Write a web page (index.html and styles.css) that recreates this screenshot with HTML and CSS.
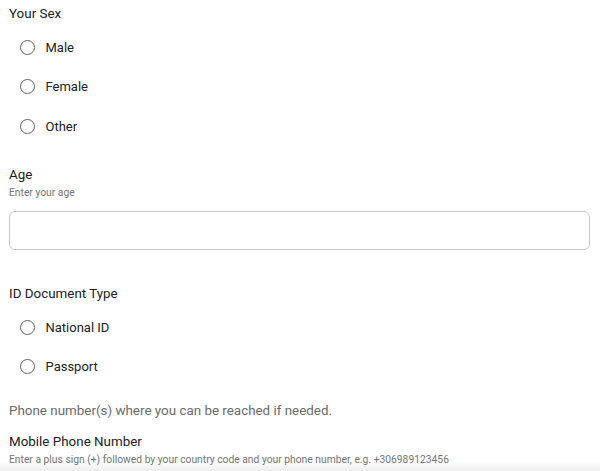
FILE: index.html
```html
<!DOCTYPE html>
<html>
<head>
<meta charset="utf-8">
<link rel="stylesheet" href="styles.css">
</head>
<body>
<div class="form">
  <section class="field">
    <div class="label">Your Sex</div>
    <div class="options">
      <label class="opt"><span class="radio"></span><span class="opt-text">Male</span></label>
      <label class="opt"><span class="radio"></span><span class="opt-text">Female</span></label>
      <label class="opt"><span class="radio"></span><span class="opt-text">Other</span></label>
    </div>
  </section>
  <section class="field age">
    <div class="label">Age</div>
    <div class="hint">Enter your age</div>
    <div class="input"></div>
  </section>
  <section class="field doc">
    <div class="label">ID Document Type</div>
    <div class="options tight">
      <label class="opt"><span class="radio"></span><span class="opt-text">National ID</span></label>
      <label class="opt"><span class="radio"></span><span class="opt-text">Passport</span></label>
    </div>
  </section>
  <p class="note">Phone number(s) where you can be reached if needed.</p>
  <section class="field phone">
    <div class="label">Mobile Phone Number</div>
    <div class="hint">Enter a plus sign (+) followed by your country code and your phone number, e.g. +306989123456</div>
  </section>
</div>
<div class="fade"></div>
</body>
</html>
```
FILE: styles.css
```css
html, body {
  margin: 0;
  padding: 0;
  background: #fff;
  overflow: hidden;
  height: 471px;
}
body {
  font-family: Roboto, "Liberation Sans", sans-serif;
  color: #202124;
  position: relative;
}
.form {
  padding: 5px 10px 0 9px;
  display: flex;
  flex-direction: column;
}
.label {
  font-size: 13.4px;
  line-height: 18px;
  color: #202124;
}
.hint {
  font-size: 10.3px;
  line-height: 14px;
  color: #757575;
  margin-top: 2px;
}
.options {
  display: flex;
  flex-direction: column;
  padding-left: 11px;
  margin-top: 15px;
  gap: 21.5px;
}
.options.tight {
  gap: 21px;
}
.opt {
  display: flex;
  align-items: center;
  height: 18px;
}
.radio {
  width: 13px;
  height: 13px;
  border: 1.6px solid #5f6368;
  border-radius: 50%;
  box-sizing: content-box;
}
.opt-text {
  font-size: 13px;
  margin-left: 10.5px;
  color: #202124;
}
.age {
  margin-top: 31px;
}
.input {
  margin-top: 11px;
  height: 37px;
  border: 1px solid #c8c8c8;
  border-radius: 6px;
}
.doc {
  margin-top: 35px;
}
.note {
  margin: 27px 0 0;
  font-size: 13.4px;
  line-height: 18px;
  color: #6b6b6b;
}
.phone {
  margin-top: 13px;
}
.fade {
  position: absolute;
  left: 0;
  right: 0;
  bottom: 0;
  height: 10px;
  background: linear-gradient(to bottom, rgba(0,0,0,0), rgba(0,0,0,0.07));
}
```
